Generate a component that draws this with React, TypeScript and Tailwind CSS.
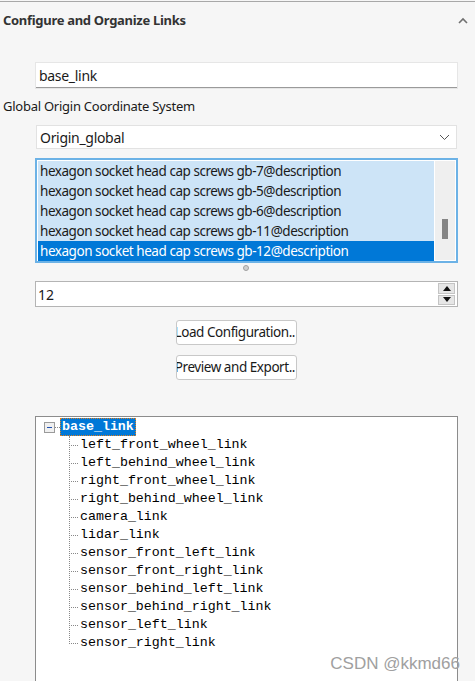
import React from "react";

const ITEMS = [
  "hexagon socket head cap screws gb-7@description",
  "hexagon socket head cap screws gb-5@description",
  "hexagon socket head cap screws gb-6@description",
  "hexagon socket head cap screws gb-11@description",
  "hexagon socket head cap screws gb-12@description",
];

const LINKS = [
  "left_front_wheel_link",
  "left_behind_wheel_link",
  "right_front_wheel_link",
  "right_behind_wheel_link",
  "camera_link",
  "lidar_link",
  "sensor_front_left_link",
  "sensor_front_right_link",
  "sensor_behind_left_link",
  "sensor_behind_right_link",
  "sensor_left_link",
  "sensor_right_link",
];

const ui = { fontFamily: '"Noto Sans", "Open Sans", sans-serif' };
const mono = { fontFamily: '"Liberation Mono", "DejaVu Sans Mono", monospace' };

export default function App() {
  return (
    <div className="relative h-[681px] w-[475px] overflow-hidden bg-[#f6f6f6] text-[14px] text-[#1a1a1a]" style={ui}>
      <div className="mt-px border-t border-[#a8a8a8]" />

      {/* section header */}
      <div className="flex h-[37px] items-center justify-between pl-[3px] pr-[6px]">
        <span className="text-[13px] font-bold tracking-[-0.3px] text-[#333]">Configure and Organize Links</span>
        <svg width="12" height="8" viewBox="0 0 12 8" fill="none" stroke="#707070" strokeWidth="1.6">
          <path d="M2 6l4-4 4 4" />
        </svg>
      </div>

      <div className="ml-[36px] mt-[24px] flex h-[25px] w-[421px] items-center border-b border-[#9a9a9a] bg-white pl-[3px] tracking-[-0.3px] shadow-[0_0_0_1px_#e6e6e6]">
        base_link
      </div>

      <div className="mt-[8px] pl-[3px] text-[13px] leading-[20px] tracking-[-0.25px]">Global Origin Coordinate System</div>

      <div className="ml-[36px] mt-[9px] flex h-[24px] w-[421px] items-center justify-between border border-[#e2e2e2] bg-white pl-[3px] pr-[6px]">
        <span className="tracking-[-0.3px]">Origin_global</span>
        <svg width="11" height="7" viewBox="0 0 11 7" fill="none" stroke="#555" strokeWidth="1">
          <path d="M1 1l4.5 4.5L10 1" />
        </svg>
      </div>

      {/* listbox */}
      <div className="ml-[35px] mt-[9px] flex h-[105px] w-[423px] border-2 border-[#6cb2e6] bg-white p-px">
        <div className="flex-1 bg-[#cde4f7]">
          {ITEMS.map((t, i) => (
            <div
              key={t}
              className={`flex h-[20px] items-center pl-[2px] text-[13.5px] tracking-[-0.45px] ${i === 4 ? "bg-[#0078d7] text-white" : ""}`}
            >
              {t}
            </div>
          ))}
        </div>
        <div className="relative w-[21px] border-l border-white bg-[#efefef]">
          <div className="absolute left-[7px] top-[58px] h-[20px] w-[6px] bg-[#858585]" />
        </div>
      </div>

      <div className="flex justify-center">
        <div className="ml-[17px] mt-[2px] h-[6px] w-[6px] rounded-full border border-[#a0a0a0] bg-[#d0d0d0]" />
      </div>

      {/* spinbox */}
      <div className="ml-[35px] mt-[10px] flex h-[26px] w-[423px] items-center justify-between border border-[#b4b4b4] bg-white pl-[2px] pr-[2px]">
        <span className="text-[14px]">12</span>
        <div className="flex h-[22px] w-[17px] flex-col gap-px">
          <div className="flex flex-1 items-center justify-center border border-[#c4c4c4] bg-[#e6e6e6]">
            <svg width="8" height="5" viewBox="0 0 8 5"><path d="M0 5L4 0l4 5z" fill="#111" /></svg>
          </div>
          <div className="flex flex-1 items-center justify-center border border-[#c4c4c4] bg-[#e6e6e6]">
            <svg width="8" height="5" viewBox="0 0 8 5"><path d="M0 0h8L4 5z" fill="#111" /></svg>
          </div>
        </div>
      </div>

      <div className="mt-[13px] flex flex-col items-center gap-[10px] pr-[2px]">
        <div className="flex h-[25px] w-[121px] items-center justify-end overflow-hidden whitespace-nowrap rounded-[3px] border border-[#c8c8c8] bg-white pr-[1px] text-[13.5px] tracking-[-0.45px]">
          Load Configuration..
        </div>
        <div className="flex h-[25px] w-[121px] items-center justify-end overflow-hidden whitespace-nowrap rounded-[3px] border border-[#c8c8c8] bg-white pr-[1px] text-[13.5px] tracking-[-0.45px]">
          Preview and Export..
        </div>
      </div>

      {/* tree */}
      <div className="ml-[35px] mt-[36px] h-[300px] w-[423px] border border-[#8c8c8c] border-b-0 bg-white pt-[1px] text-black" style={mono}>
        <div className="flex h-[18px] items-center">
          <div className="ml-[8px] flex h-[11px] w-[11px] items-center justify-center border border-[#9a9a9a] bg-[#f0f0f0]">
            <div className="h-px w-[5px] bg-[#2050b0]" />
          </div>
          <div className="w-[5px] border-t border-dotted border-[#888]" />
          <div className="flex h-[18px] items-center border border-dotted border-[#e08020] bg-[#0078d7] px-px text-[13.3px] font-bold text-white">
            base_link
          </div>
        </div>
        <div className="relative ml-[33px]">
          <div className="absolute left-0 top-0 h-[208px] border-l border-dotted border-[#888]" />
          {LINKS.map((l) => (
            <div key={l} className="flex h-[18px] items-center">
              <div className="w-[9px] border-t border-dotted border-[#888]" />
              <span className="ml-[2px] text-[13.3px] leading-[18px]">{l}</span>
            </div>
          ))}
        </div>
      </div>

      <div className="absolute bottom-[5px] right-[15px] text-[17px] text-[#a0a0a0]" style={{ fontFamily: '"Liberation Sans", Arial, sans-serif' }}>
        CSDN @kkmd66
      </div>
    </div>
  );
}
